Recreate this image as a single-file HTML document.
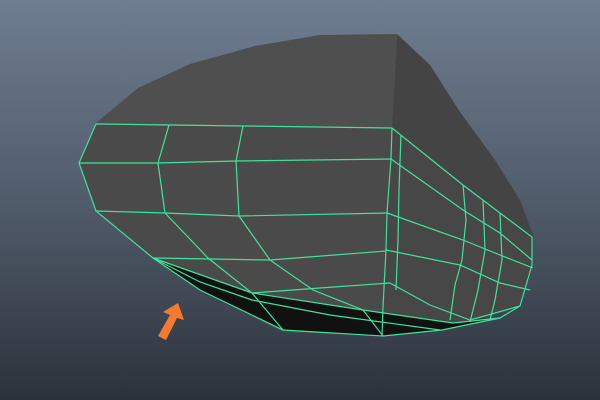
<!DOCTYPE html><html><head><style>html,body{margin:0;padding:0;width:600px;height:400px;overflow:hidden}</style></head><body>
<svg width="600" height="400" viewBox="0 0 600 400" xmlns="http://www.w3.org/2000/svg">
<defs><linearGradient id="bg" x1="0" y1="0" x2="0" y2="1"><stop offset="0" stop-color="#6e7d90"/><stop offset="0.5" stop-color="#515c6b"/><stop offset="1" stop-color="#2c323b"/></linearGradient></defs>
<rect width="600" height="400" fill="url(#bg)"/>
<polygon points="96,123 138,88 190,64 255,46 320,35 397,34 392,128" fill="#4f4f4f"/>
<polygon points="397,34 430,65 460,112 495,160 520,200 533,235 532,265 520,306 382,305 392,128" fill="#444"/>
<polygon points="96,124 392,128 386,250 382,336 282,332 200,290 152,258 96,211 79,163" fill="#4a4a4a"/>
<polygon points="392,128 463,185 500,213 532,237 533,268 520,306 442,330 382,336 386,250" fill="#474747"/>
<polygon points="153,258 252,293 363,310 453,323 500,318 442,330 383,336 283,330 200,290" fill="#111"/>
<g fill="none" stroke="#3ee39a" stroke-width="1.2">
<polyline points="96,124 169,125 243,126 392,128"/>
<polyline points="79,163 158,163 236,161 391,159"/>
<polyline points="96,211 165,213 239,216 387,213"/>
<polyline points="153,258 270,260 386,251"/>
<polyline points="252,293 320,288 390,283"/>
<polyline points="153,258 252,293 363,310 453,323 500,318"/>
<polyline points="153,258 200,282 252,300 330,315 440,330"/>
<polyline points="96,124 79,163 96,211 153,258 200,290 283,330 383,336 442,330 500,318 520,306 532,265 532,237"/>
<polyline points="169,125 158,163 165,213 208,258 252,293 283,330"/>
<polyline points="243,126 236,161 239,216 270,260 313,290 363,310 383,336"/>
<polyline points="392,128 391,159 387,213 386,250 383,307 382,336"/>
<polyline points="401,135 399,190 398,240 396,290"/>
<polyline points="392,128 463,185 500,213 532,237"/>
<polyline points="391,159 463,210 500,233 532,260"/>
<polyline points="387,213 463,240 500,255 533,268"/>
<polyline points="386,250 460,265 500,283 530,290"/>
<polyline points="390,283 430,305 470,320 520,306"/>
<polyline points="463,185 466,220 462,260 455,285 450,320"/>
<polyline points="483,200 485,250 478,290 470,322"/>
<polyline points="500,213 502,260 495,300 490,320"/>
</g>
<polygon points="178,303 184,320 177,318 166,340 158,336 170,315 163,312" fill="#f47a30"/>
</svg>
</body></html>
